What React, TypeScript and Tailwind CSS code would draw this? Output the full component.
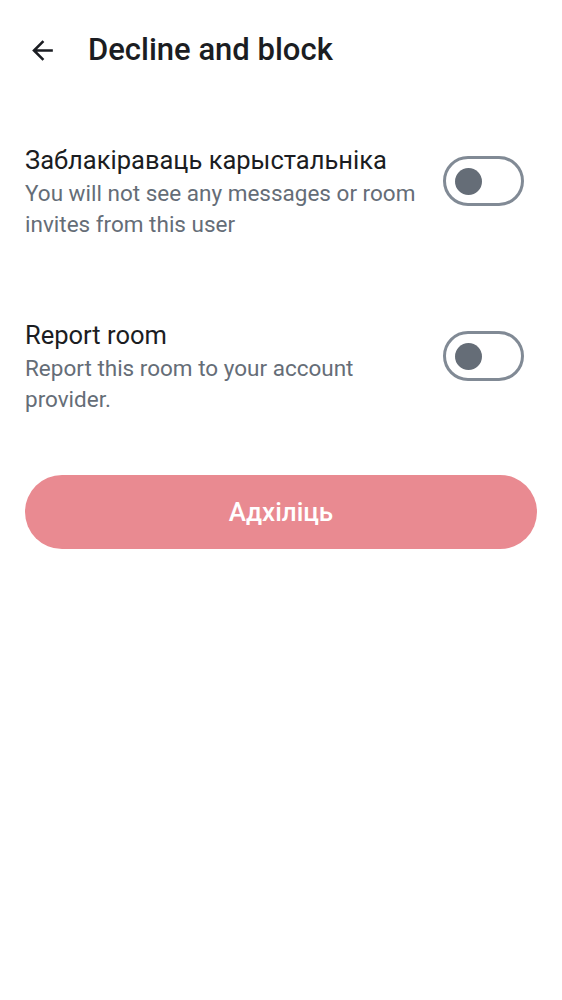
import React from 'react';

const Toggle: React.FC = () => {
	return (
		<div className="mt-[11px] flex h-[50px] w-[81px] shrink-0 items-center rounded-full border-[3px] border-[#818a95] bg-white px-[9px]">
			<div className="h-[27px] w-[27px] rounded-full bg-[#656d77]" />
		</div>
	);
};

const Row: React.FC<{ title: string; subtitle: string }> = ({
	title,
	subtitle,
}) => {
	return (
		<div className="flex items-start gap-4">
			<div className="flex flex-1 flex-col">
				<div className="text-[25.5px] leading-[30px] text-[#1b1d22]">{title}</div>
				<div className="mt-[3px] text-[22.5px] leading-[31px] text-[#656d77]">
					{subtitle}
				</div>
			</div>
			<Toggle />
		</div>
	);
};

export default function App() {
	return (
		<div
			className="min-h-[1000px] w-full bg-white"
			style={{ fontFamily: 'Roboto, "Noto Sans", sans-serif' }}
		>
			<div className="flex h-[100px] items-center gap-[30px] pl-[27px]">
				<svg width="31" height="31" viewBox="0 0 24 24" fill="#1b1d22">
					<path d="M20 11H7.83l5.59-5.59L12 4l-8 8 8 8 1.41-1.41L7.83 13H20v-2z" />
				</svg>
				<div className="text-[31px] font-medium text-[#1b1d22]">
					Decline and block
				</div>
			</div>
			<div className="flex flex-col px-[25px] pt-[45px]">
				<div className="pr-[13px]">
					<Row
						title="Заблакіраваць карыстальніка"
						subtitle="You will not see any messages or room invites from this user"
					/>
				</div>
				<div className="mt-[80px] pr-[13px]">
					<Row
						title="Report room"
						subtitle="Report this room to your account provider."
					/>
				</div>
				<button className="mt-[60px] flex h-[74px] w-full items-center justify-center rounded-full bg-[#e98a91] text-[26px] font-medium text-white">
					Адхіліць
				</button>
			</div>
		</div>
	);
}
